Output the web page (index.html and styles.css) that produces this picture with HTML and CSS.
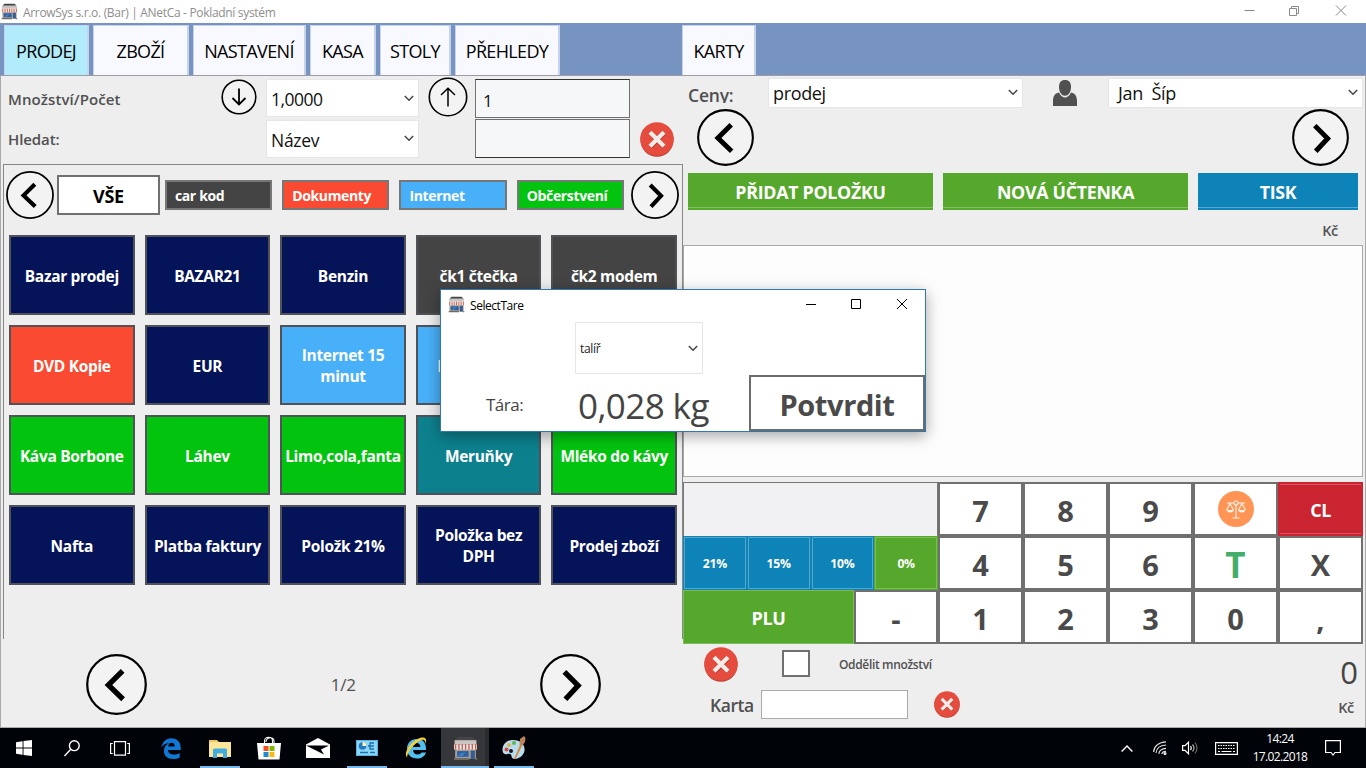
FILE: index.html
```html
<!DOCTYPE html>
<html lang="cs">
<head>
<meta charset="utf-8">
<title>ANetCa - Pokladní systém</title>
<link rel="stylesheet" href="styles.css">
</head>
<body>
<svg class="sprite" width="0" height="0">
  <symbol id="left" viewBox="0 0 60 60"><circle cx="30" cy="30" r="28.8" fill="#f3f3f3" stroke="#000" stroke-width="2.2"/><path d="M36 16.5 22 30.5 36.5 44.5" fill="none" stroke="#000" stroke-width="5.2"/></symbol>
  <symbol id="right" viewBox="0 0 60 60"><circle cx="30" cy="30" r="28.8" fill="#f3f3f3" stroke="#000" stroke-width="2.2"/><path d="M24 17.5 37.5 31 25 44.5" fill="none" stroke="#000" stroke-width="5.2"/></symbol>
  <symbol id="down" viewBox="0 0 36 36"><circle cx="18" cy="18" r="16.8" fill="#f3f3f3" stroke="#000" stroke-width="1.6"/><path d="M18 9.5V25.5M11.5 19 18 25.5 24.5 19" fill="none" stroke="#000" stroke-width="1.8"/></symbol>
  <symbol id="up" viewBox="0 0 40 40"><circle cx="20" cy="20" r="18.7" fill="#f3f3f3" stroke="#000" stroke-width="1.6"/><path d="M20 29.5V11.5M13 18 20 11.2 27 18" fill="none" stroke="#000" stroke-width="1.5"/></symbol>
  <symbol id="cancel" viewBox="0 0 34 35"><ellipse cx="17" cy="18" rx="16.5" ry="16.8" fill="#b83a31"/><ellipse cx="17" cy="17" rx="16.8" ry="16.8" fill="#e64c3d"/><path d="M10.5 11.5 24 25M24 11.5 10.5 25" stroke="#b5382d" stroke-width="4.2"/><path d="M10 10.2 24 24.2M24 10.2 10 24.2" stroke="#f4ece8" stroke-width="4.2"/></symbol>
  <symbol id="chev" viewBox="0 0 10 7"><path d="M.8 1 5 5.2 9.2 1" fill="none" stroke="#444" stroke-width="1.5"/></symbol>
  <symbol id="shop" viewBox="0 0 24 24"><path d="M5 1H19L22 4H2z" fill="#454547"/><path d="M1.500 4H22.500V8H1.500z" fill="#c9c5c2"/><path d="M2 10H22V22H2z" fill="#a39d99"/><path d="M1 8H23V13H1z" fill="#f6eeea"/><path d="M2.500 8v5M5.700 8v5M8.900 8v5M12.100 8v5M15.300 8v5M18.500 8v5M21.700 8v5" stroke="#c5564a" stroke-width="1.300"/><path d="M4 14.500H15V20H4z" fill="#2e5fa0"/><path d="M4.500 19.500 8 16H12L9 19.500z" fill="#3f7fc4"/><path d="M17 14H21V22H17z" fill="#365d91"/><path d="M1 21H15.500V23H1zM21.500 21H23v2h-1.500z" fill="#726962"/></symbol>
</svg>

<header class="titlebar">
  <svg class="app-icon"><use href="#shop"/></svg>
  <span class="title-text">ArrowSys s.r.o. (Bar) | ANetCa - Pokladní systém</span>
  <svg class="win-controls" viewBox="0 0 106 14" fill="none" stroke="#8a8a8a"><path d="M.5 6.500h10M45.500 4.500h7v7h-7zM47.500 4.500v-2h7v7h-2M92 1.500l10 10M102 1.500l-10 10"/></svg>
</header>

<nav class="menu">
  <a class="tab t1 active">PRODEJ</a><a class="tab t2">ZBOŽÍ</a><a class="tab t3">NASTAVENÍ</a><a class="tab t4">KASA</a><a class="tab t5">STOLY</a><a class="tab t6">PŘEHLEDY</a><a class="tab t7">KARTY</a>
</nav>

<main class="work">
  <section class="left">
    <div class="filters">
      <span class="flabel l1">Množství/Počet</span>
      <svg class="i-down"><use href="#down"/></svg>
      <div class="select s1"><span>1,0000</span><svg class="chev"><use href="#chev"/></svg></div>
      <svg class="i-up"><use href="#up"/></svg>
      <div class="field">1</div>
      <span class="flabel l2">Hledat:</span>
      <div class="select s2"><span>Název</span><svg class="chev"><use href="#chev"/></svg></div>
      <div class="field f2"></div>
      <svg class="cancel c34"><use href="#cancel"/></svg>
    </div>
    <div class="group">
      <div class="cats">
        <svg class="i48"><use href="#left"/></svg>
        <div class="all">VŠE</div>
        <div class="cat gray">car kod</div><div class="cat red">Dokumenty</div><div class="cat sky">Internet</div><div class="cat green">Občerstvení</div>
        <svg class="i48 last"><use href="#right"/></svg>
      </div>
      <div class="tiles">
        <div class="tile navy">Bazar prodej</div><div class="tile navy">BAZAR21</div><div class="tile navy">Benzin</div><div class="tile gray">čk1 čtečka</div><div class="tile gray">čk2 modem</div>
        <div class="tile red">DVD Kopie</div><div class="tile navy">EUR</div><div class="tile sky">Internet 15<br>minut</div><div class="tile sky">Internet 30</div><div class="tile sky"></div>
        <div class="tile green">Káva Borbone</div><div class="tile green">Láhev</div><div class="tile green">Limo,cola,fanta</div><div class="tile teal">Meruňky</div><div class="tile green">Mléko do kávy</div>
        <div class="tile navy">Nafta</div><div class="tile navy">Platba faktury</div><div class="tile navy">Položk 21%</div><div class="tile navy">Položka bez<br>DPH</div><div class="tile navy">Prodej zboží</div>
      </div>
    </div>
    <div class="pager"><svg class="i60"><use href="#left"/></svg><span>1/2</span><svg class="i60"><use href="#right"/></svg></div>
  </section>

  <section class="right">
    <div class="prices">
      <span class="plabel">Ceny:</span>
      <div class="select p1"><span>prodej</span><svg class="chev"><use href="#chev"/></svg></div>
      <svg class="user" viewBox="0 0 24 26"><path d="M0 26V21C0 15 3 13 6 12.500 7.500 16 10 17.500 12 17.500s4.500-1.500 6-5C21 13 24 15 24 21V26z" fill="#505050"/><path d="M12 0C16 0 18 2.500 18 7 18 12 15.500 15.800 12 15.800S6 12 6 7C6 2.500 8 0 12 0z" fill="#505050"/></svg>
      <div class="select p2"><span>Jan&nbsp; Šíp</span><svg class="chev"><use href="#chev"/></svg></div>
    </div>
    <div class="switch"><svg class="i56"><use href="#left"/></svg><svg class="i56"><use href="#right"/></svg></div>
    <div class="actions"><div class="btn lime">PŘIDAT POLOŽKU</div><div class="btn lime">NOVÁ ÚČTENKA</div><div class="btn blue">TISK</div></div>
    <div class="currency">Kč</div>
    <div class="receipt"></div>
    <div class="keypad">
      <div class="display"></div>
      <div class="key">7</div><div class="key">8</div><div class="key">9</div>
      <div class="key"><svg class="scale" viewBox="0 0 36 36"><circle cx="18" cy="18" r="18" fill="#ff9455"/><g fill="none" stroke="#fff3e8" stroke-width="1.1"><path d="M18 14v12.500M14.500 27h7M9 12h7M20 12h7M12 12.500 8.500 19M12 12.500l3.500 6.500M24 12.500 20.500 19M24 12.500l3.500 6.500"/><circle cx="18" cy="12" r="2"/></g><path d="M8.500 19H16q-1 2.500-3.700 2.500T8.500 19zM20 19h7.500q-1 2.500-3.700 2.500T20 19z" fill="#fff3e8"/></svg></div>
      <div class="key clear">CL</div>
      <div class="vat"><div class="blue">21%</div><div class="blue">15%</div><div class="blue">10%</div><div class="lime">0%</div></div>
      <div class="key">4</div><div class="key">5</div><div class="key">6</div><div class="key tare">T</div><div class="key">X</div>
      <div class="plurow"><div class="plu lime">PLU</div><div class="key">-</div></div>
      <div class="key">1</div><div class="key">2</div><div class="key">3</div><div class="key">0</div><div class="key">,</div>
    </div>
    <footer class="summary">
      <div class="sum-left">
        <div class="split"><svg class="cancel c33"><use href="#cancel"/></svg><i class="check"></i><span>Oddělit množství</span></div>
        <div class="card"><span>Karta</span><div class="card-input"></div><svg class="cancel c26"><use href="#cancel"/></svg></div>
      </div>
      <div class="total"><b>0</b><span>Kč</span></div>
    </footer>
  </section>
</main>

<div class="dialog">
  <div class="dlg-title"><svg class="app-icon"><use href="#shop"/></svg><span>SelectTare</span><svg class="dlg-controls" viewBox="0 0 102 12" fill="none" stroke="#000"><path d="M0 6.500h10M45.500 1.500h9v9h-9zM91 1l10 10M101 1 91 11"/></svg></div>
  <div class="dlg-select"><span>talíř</span><svg class="chev"><use href="#chev"/></svg></div>
  <div class="dlg-row"><span class="tara">Tára:</span><span class="weight">0,028 kg</span><div class="confirm">Potvrdit</div></div>
</div>

<div class="taskbar">
  <div class="task w48"><svg width="16" height="16" viewBox="0 0 16 16" fill="#fff"><path d="M0 2.200 6.600 1.200V7.500H0zM7.500 1.100 16 0V7.500H7.500zM0 8.400H6.600V14.800L0 13.800zM7.500 8.400H16V16L7.500 14.900z"/></svg></div>
  <div class="task w48"><svg width="16" height="17" viewBox="0 0 16 17" fill="none" stroke="#fff" stroke-width="1.4"><circle cx="10.300" cy="5.700" r="4.900"/><path d="M6.800 9.300.5 16"/></svg></div>
  <div class="task w48"><svg width="20" height="15" viewBox="0 0 20 15" fill="none" stroke="#fff" stroke-width="1.2"><path d="M4.500.7h11v13.500h-11zM2.800 2.500H.6v10h2.200M17.200 2.500h2.200v10h-2.200"/></svg></div>
  <div class="task edge"><svg width="20" height="21" viewBox="0 0 20 21"><path d="M.3 9.600C1.300 3.600 5.500.2 10.300.2c5.800 0 9.400 4 9.400 9.300v2.600H7c.2 3.200 2.700 4.500 5.800 4.500 2.300 0 4.200-.6 5.900-1.600v4.400C16.800 20.500 14.500 21 12 21 6.600 21 2.900 17.900 2.900 13c0-3.600 2-6.500 5.300-8C4.800 5.100 1.800 7 .3 9.600zM7.200 8.500h6.600c0-2.300-1-3.700-3.200-3.700S7.500 6.300 7.200 8.500z" fill="#0f78d4"/></svg></div>
  <div class="task open"><svg width="22" height="19" viewBox="0 0 22 19"><path d="M0 1H8L10 3H22V18H0z" fill="#efc75c"/><path d="M1 3H22V18H0V5z" fill="#fbe69a"/><path d="M4 11Q4 9.500 5.500 9.500H16.500Q18 9.500 18 11V19H14V14.500H8V19H4z" fill="#42ace0"/></svg></div>
  <div class="task"><svg width="24" height="24" viewBox="0 0 24 24"><path d="M7.500 8V5c0-5 8-5 8 0v3M9 6c0-5 8-6 8-1v3" fill="none" stroke="#fff" stroke-width="1.1"/><path d="M0 7H24L22.500 23.500H1.500z" fill="#fff"/><path d="M6.500 10h5v5h-5z" fill="#ef5028"/><path d="M12.500 10h5v5h-5z" fill="#7fb900"/><path d="M6.500 16h5v5h-5z" fill="#1f8bd3"/><path d="M12.500 16h5v5h-5z" fill="#fdb813"/></svg></div>
  <div class="task mail"><svg width="24" height="20" viewBox="0 0 24 20"><path d="M12 0 24 6.500V20H0V6.500z" fill="#fff"/><path d="M0 7.500H23L15 11.500 18 16.500z" fill="#000208"/></svg></div>
  <div class="task open cardapp"><svg width="22" height="17" viewBox="0 0 22 17"><path d="M0 0H22V16H0z" fill="#54b4ea"/><path d="M1 1H21V15H1z" fill="#8ed6f8"/><circle cx="6.500" cy="6" r="3.800" fill="#257ac2"/><path d="M6.500 6V2a4 4 0 0 1 3.800 4z" fill="#fff2b2"/><path d="M12 6h2V3h4M14 6h4M14 6v3h4M4 12.500h8M14 12.500h5" fill="none" stroke="#1873ae" stroke-width="1.3"/></svg></div>
  <div class="task"><svg width="24" height="24" viewBox="0 0 24 24"><path d="M3 13C3 7 7 3 13 3s9 4 9 10v1H9c.3 3 2 4.500 4.600 4.500 2 0 3.200-.8 4-2H22c-1.500 4-4.700 6-8.700 6C7 22.500 3 18.500 3 13zm6-2h7.500C16 8.500 15 7 12.700 7 10.500 7 9.300 8.500 9 11z" fill="#52c0ee"/><path d="M3 21.500C-2 16 11 1 19 1.500c4 .2 3.500 4 2 6.500 1-5-2-5.500-6.500-2.500C8 10 3.500 16 3 21.500z" fill="#f5cf38"/></svg></div>
  <div class="task open current"><svg width="25" height="25"><use href="#shop"/></svg></div>
  <div class="task open paint"><svg width="24" height="24" viewBox="0 0 24 24"><path d="M11 4C4 4 .5 9 .5 14c0 4 3 5 5 4 2-.8 4 0 4 2 0 3 3 3.500 6 2.500 5-1.500 7.500-6 7-10C22 7 17 4 11 4z" fill="#b9dcef"/><circle cx="4.500" cy="13.500" r="2" fill="#d4493d"/><circle cx="7" cy="9" r="2" fill="#e0b340"/><circle cx="12" cy="7" r="2" fill="#5bb551"/><circle cx="9" cy="15" r="2" fill="#111827"/><path d="M12 23 18 9l2 1-6.500 13z" fill="#d58a38"/><path d="M17.500 9 18 3l4-3 1.500 2-.5 4-3 4z" fill="#b98258"/></svg></div>
  <div class="tray">
    <svg class="t-up" width="12" height="7" viewBox="0 0 12 7"><path d="M.6 6.400 6 1l5.400 5.400" fill="none" stroke="#fff" stroke-width="1.4"/></svg>
    <svg class="t-wifi" width="14" height="14" viewBox="0 0 14 14" fill="none" stroke="#ddd" stroke-width="1.2"><path d="M.6 11C1 5.500 5.500 1 13 .8M3 12C3.500 7.500 7 4.300 13 4M5.800 12.800C6.300 9.700 9 7.600 13 7.400M8.800 13c.3-1.500 2-2.600 4.200-2.600"/><circle cx="12" cy="12.500" r="1" fill="#fff"/></svg>
    <svg class="t-sound" width="17" height="14" viewBox="0 0 17 14" fill="none" stroke="#fff" stroke-width="1.2"><path d="M.6 4.600H3L6.500 1.200V12.800L3 9.400H.6zM8.500 5q1.500 2 0 4"/><path d="M10.500 3.500q3 3.500 0 7" stroke="#aaa"/><path d="M13 1.500q4 5.500 0 11" stroke="#666"/></svg>
    <svg class="t-key" width="23" height="13" viewBox="0 0 23 13" fill="none" stroke="#fff"><path d="M.6.6h21.800v11.800H.6z" stroke-width="1.2"/><path d="M3 3.500h17M3 6.500h17" stroke-dasharray="1.500 1"/><path d="M3 9.500h2M6.500 9.500h10M18 9.500h2"/></svg>
    <div class="clock">14:24<br>17.02.2018</div>
    <svg class="t-note" width="16" height="16" viewBox="0 0 16 16"><path d="M.6.6h14.800v11.900H10L8 15l-2-2.500H.6z" fill="none" stroke="#fff" stroke-width="1.2"/></svg>
  </div>
</div>
</body>
</html>
```
FILE: styles.css
```css
* { box-sizing: border-box; }
body { margin: 0; width: 1366px; height: 768px; overflow: hidden; position: relative; display: flex; flex-direction: column; background: #eee; color: #444; font-family: "Open Sans", "Noto Sans", sans-serif; }
svg { display: block; flex: none; }
.sprite { position: absolute; }

.titlebar { height: 23px; flex: none; display: flex; align-items: center; background: #fff; padding-left: 1px; }
.app-icon { width: 17px; height: 17px; }
.title-text { margin-left: 5px; padding-top: 1px; font-size: 12px; letter-spacing: -0.32px; color: #8e8e8e; white-space: nowrap; }
.win-controls { width: 106px; height: 14px; margin: -2px 16px 0 auto; }

.menu { height: 53px; flex: none; display: flex; padding: 2px 0 0 4px; background: #7794c0; border-bottom: 1px solid #9c9ca6; }
.tab { flex: none; border: solid #c6d3ee; border-width: 1px 2px 0 1px; background: #f8f9ff; color: #000; font-size: 18px; letter-spacing: -0.65px; line-height: 50px; text-align: center; white-space: nowrap; margin-right: 4px; }
.active { background: #b2ebf9; }
.t1 { width: 85px; } .t2 { width: 96px; } .t3 { width: 113px; } .t4 { width: 66px; } .t5 { width: 71px; } .t6 { width: 105px; } .t7 { width: 74px; margin-left: 118px; }

.work { height: 652px; flex: none; display: flex; border: solid #aaa; border-width: 0 1px 1px; }
.left { width: 682px; flex: none; padding-left: 2px; display: flex; flex-direction: column; }
.filters { height: 88px; display: grid; grid-template-columns: 213px 50px 153px 56px 155px 1fr; grid-template-rows: 41px 40px; padding-top: 2px; align-items: center; }
.flabel { padding-left: 5px; font-size: 15px; font-weight: 600; letter-spacing: 0; white-space: nowrap; color: #505050; }
.l1 { letter-spacing: 0.08px; }
.l2 { grid-column: 1 / 3; letter-spacing: -0.1px; }
.i-down { width: 36px; height: 36px; margin-left: 5px; margin-top: -3px; }
.i-up { width: 40px; height: 40px; margin: -3px 0 0 9px; }
.select { background: #fff; border: 1px solid #e6e6ea; display: flex; align-items: center; justify-content: space-between; color: #111; font-size: 17.5px; letter-spacing: -0.5px; white-space: nowrap; padding: 0 4px; }
.chev { width: 10px; height: 7px; }
.s1 { height: 38px; margin-top: -2px; padding-top: 2px; }
.s2 { height: 38px; margin-top: -1px; }
.s2 span { padding-top: 2px; letter-spacing: -0.3px; }
.field { height: 39px; margin-top: -1px; background: #f6f7f9; border: 1px solid #707070; border-top-color: #333; font-size: 17px; line-height: 41px; padding-left: 7px; color: #111; }
.f2 { grid-column: 5; border-color: #707070; border-bottom-color: #333; }
.c34 { width: 34px; height: 35px; margin-left: 10px; }

.group { height: 475px; border: 1px solid #888; border-bottom: 0; padding: 5px 3px 0 2px; }
.cats { height: 49px; display: flex; align-items: center; }
.i48 { width: 48px; height: 48px; }
.last { margin-left: 7px; }
.all { width: 103px; height: 40px; margin: 0 5px 0 3px; border: 2px solid #707070; background: #fff; color: #000; font-size: 18px; font-weight: 700; letter-spacing: -0.3px; text-align: center; line-height: 38px; }
.cat { width: 107.4px; height: 30px; margin-right: 10px; border: 2px solid #777; color: #fff; font-size: 14px; font-weight: 700; letter-spacing: -0.35px; line-height: 28px; padding-left: 8px; white-space: nowrap; }
.cat:nth-of-type(5) { margin-right: 0; }
.tiles { margin: 16px 2px 0 3px; display: grid; grid-template-columns: repeat(5, 1fr); grid-auto-rows: 80px; gap: 10px; }
.tile { border: 2px solid #505257; display: flex; align-items: center; justify-content: center; text-align: center; color: #fff; font-size: 15.5px; line-height: 21px; font-weight: 700; letter-spacing: -0.32px; white-space: nowrap; padding-top: 2px; }
.gray { background: #444; } .navy { background: #051459; } .red { background: #fa4b32; } .sky { background: #48b0f9; } .green { background: #02c40e; } .teal { background: #0d808e; }
.pager { flex: 1; display: flex; justify-content: space-between; padding: 15px 82px 0 82.5px; }
.pager span { font-size: 17px; line-height: 62px; font-weight: 500; letter-spacing: -0.2px; color: #505050; }
.i60 { width: 61px; height: 61px; }

.right { width: 680px; flex: none; }
.prices { height: 32px; display: flex; padding-top: 2px; }
.plabel { width: 85px; height: 25px; overflow: hidden; padding-left: 5px; font-size: 17.5px; line-height: 35px; font-weight: 600; letter-spacing: -0.2px; color: #505050; }
.prices .select { height: 30px; width: 255px; font-size: 18px; letter-spacing: -0.35px; padding-bottom: 1px; }
.prices .p2 { padding-left: 9px; }
.user { width: 24px; height: 26px; margin: 2px 31px 0 30px; }
.switch { height: 65px; padding: 1px 14px 0; display: flex; justify-content: space-between; }
.i56 { width: 57px; height: 57px; }
.actions { display: grid; grid-template-columns: 245px 245px 160px; gap: 10px; padding-left: 5px; }
.btn { height: 37px; color: #fff; font-weight: 700; font-size: 17.8px; letter-spacing: -0.28px; text-align: center; line-height: 38px; white-space: nowrap; }
.lime { background: #56a82c; } .blue { background: #0d83b8; }
.btn { box-shadow: inset 0 -2px #56a82c, inset 0 -3px #82c05f; }
.btn.blue { box-shadow: inset 0 -2px #0d83b8, inset 0 -3px #52a8d0; }
.currency { height: 35px; text-align: right; padding-right: 25px; line-height: 41px; font-size: 14.5px; font-weight: 600; letter-spacing: -0.3px; color: #555; }
.receipt { height: 232px; background: #fdfdfd; border: 1px solid #aaa; margin-bottom: 5px; }
.keypad { height: 162px; display: grid; grid-template-columns: 255px repeat(5, 1fr); grid-template-rows: repeat(3, 54px); }
.display { background: #f1f1f4; border: 1px solid #777; border-bottom: 0; }
.key { background: #fff; border: 2px solid #707070; display: flex; align-items: center; justify-content: center; font-size: 29px; font-weight: 700; color: #4a4a4a; line-height: 1; padding-top: 2px; }
.scale { width: 36px; height: 36px; margin-top: -3px; }
.clear { background: #c92430; border-color: #c92430; color: #fff; font-size: 18px; letter-spacing: -0.5px; box-shadow: inset 0 1px #d95560, inset 0 -1px #d95560; }
.tare { color: #43ae6b; font-size: 35px; }
.vat { display: grid; grid-template-columns: repeat(4, 1fr); }
.vat div { display: flex; align-items: center; justify-content: center; color: #fff; font-size: 12.2px; font-weight: 700; letter-spacing: -0.3px; outline: 1px solid #55a6ca; outline-offset: -2px; }
.vat .lime { outline-color: #7abd58; }
.plurow { display: flex; }
.plu { width: 171px; border: 1px solid #7abd58; color: #fff; display: flex; align-items: center; justify-content: center; font-size: 18px; font-weight: 700; letter-spacing: -0.4px; padding-top: 1px; }
.plurow .key { flex: 1; }
.summary { display: flex; justify-content: space-between; height: 83px; }
.split { height: 41px; display: flex; align-items: center; padding-left: 21px; }
.c33 { width: 34px; height: 35px; }
.check { width: 28px; height: 27px; border: 2px solid #707070; background: #fff; margin: -2px 29px 0 44px; }
.split span { font-size: 12px; font-weight: 600; letter-spacing: -0.35px; color: #505050; }
.card { display: flex; align-items: center; height: 39px; padding-left: 27px; }
.card > span { width: 51px; font-size: 17.5px; font-weight: 600; letter-spacing: -0.45px; color: #505050; }
.card-input { width: 147px; height: 29px; background: #fff; border: 1px solid #aaa; }
.c26 { width: 26px; height: 27px; margin-left: 26px; }
.total { display: flex; flex-direction: column; align-items: flex-end; padding: 8px 5px 0 0; }
.total b { font-size: 31px; font-weight: 500; line-height: 40px; color: #444; }
.total span { font-size: 14.5px; font-weight: 600; line-height: 20px; letter-spacing: -0.3px; margin: 6px 4px 0 0; color: #555; }

.dialog { position: absolute; left: 440px; top: 289px; width: 486px; height: 143px; border: 1px solid #3078b0; background: #fff; box-shadow: 0 4px 14px rgba(0,0,0,.35); display: flex; flex-direction: column; align-items: center; }
.dlg-title { width: 100%; height: 32px; display: flex; align-items: center; padding: 0 17px 4px 7px; font-size: 12px; letter-spacing: -0.45px; color: #000; }
.dlg-title span { margin-left: 5px; padding-top: 2px; }
.dlg-controls { width: 102px; height: 12px; margin-left: auto; }
.dlg-select { width: 128px; height: 52px; margin-right: 88px; border: 1px solid #e6e6e6; display: flex; align-items: center; justify-content: space-between; padding: 0 4px; font-size: 12px; letter-spacing: -0.3px; color: #222; }
.dlg-row { width: 100%; flex: 1; display: flex; align-items: flex-end; }
.tara { width: 137px; padding-left: 45px; font-size: 17px; font-weight: 500; line-height: 52px; letter-spacing: -0.5px; }
.weight { width: 171px; font-size: 35px; font-weight: 500; line-height: 51px; letter-spacing: -0.6px; white-space: nowrap; }
.confirm { width: 176px; height: 56px; border: 2px solid #6c6c6c; font-size: 29px; font-weight: 700; letter-spacing: -0.4px; line-height: 55px; text-align: center; color: #4a4a4a; }

.taskbar { height: 40px; flex: none; display: flex; background: #000307; }
.task { width: 49px; display: flex; align-items: center; justify-content: center; position: relative; }
.w48 { width: 48px; }
.edge { margin-left: 2px; }
.open::after { content: ""; position: absolute; left: 5px; right: 4px; bottom: 0; height: 2px; background: #76b9ed; }
.current { width: 48px; margin-left: 1px; background: #35373a; box-shadow: inset -4px 0 #2a2c2f; }
.current::after { left: 0; right: 0; }
.tray { margin-left: auto; display: flex; align-items: center; padding-right: 3px; color: #fff; }
.t-wifi { margin-left: 20px; } .t-sound { margin-left: 15px; } .t-key { margin-left: 16px; }
.clock { width: 58px; margin-left: 13px; font-size: 12px; line-height: 18px; letter-spacing: -0.65px; text-align: center; white-space: nowrap; }
.t-note { margin: 0 22px 0 16px; }
```
